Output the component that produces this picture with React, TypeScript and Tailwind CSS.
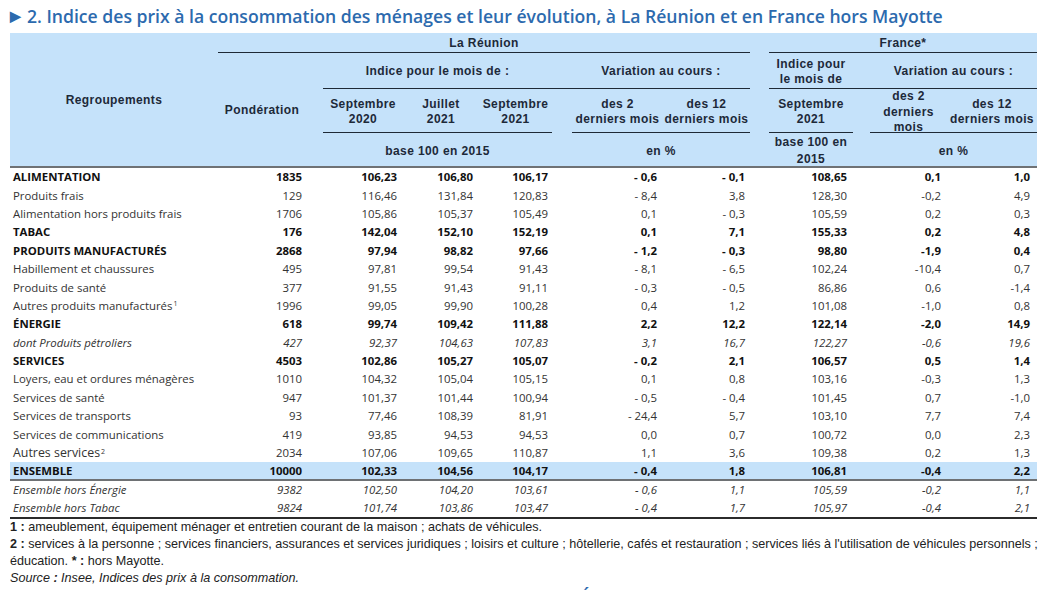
type Row = {
  label: string;
  sup?: string;
  v: string[];
  kind?: 'bold' | 'italic' | 'total';
  big?: boolean;
};

const rows: Row[] = [
  { label: 'ALIMENTATION', kind: 'bold', v: ['1835', '106,23', '106,80', '106,17', '- 0,6', '- 0,1', '108,65', '0,1', '1,0'] },
  { label: 'Produits frais', v: ['129', '116,46', '131,84', '120,83', '- 8,4', '3,8', '128,30', '-0,2', '4,9'] },
  { label: 'Alimentation hors produits frais', v: ['1706', '105,86', '105,37', '105,49', '0,1', '- 0,3', '105,59', '0,2', '0,3'] },
  { label: 'TABAC', kind: 'bold', v: ['176', '142,04', '152,10', '152,19', '0,1', '7,1', '155,33', '0,2', '4,8'] },
  { label: 'PRODUITS MANUFACTURÉS', kind: 'bold', v: ['2868', '97,94', '98,82', '97,66', '- 1,2', '- 0,3', '98,80', '-1,9', '0,4'] },
  { label: 'Habillement et chaussures', v: ['495', '97,81', '99,54', '91,43', '- 8,1', '- 6,5', '102,24', '-10,4', '0,7'] },
  { label: 'Produits de santé', v: ['377', '91,55', '91,43', '91,11', '- 0,3', '- 0,5', '86,86', '0,6', '-1,4'] },
  { label: 'Autres produits manufacturés', sup: '1', v: ['1996', '99,05', '99,90', '100,28', '0,4', '1,2', '101,08', '-1,0', '0,8'] },
  { label: 'ÉNERGIE', kind: 'bold', v: ['618', '99,74', '109,42', '111,88', '2,2', '12,2', '122,14', '-2,0', '14,9'] },
  { label: 'dont Produits pétroliers', kind: 'italic', v: ['427', '92,37', '104,63', '107,83', '3,1', '16,7', '122,27', '-0,6', '19,6'] },
  { label: 'SERVICES', kind: 'bold', v: ['4503', '102,86', '105,27', '105,07', '- 0,2', '2,1', '106,57', '0,5', '1,4'] },
  { label: 'Loyers, eau et ordures ménagères', v: ['1010', '104,32', '105,04', '105,15', '0,1', '0,8', '103,16', '-0,3', '1,3'] },
  { label: 'Services de santé', v: ['947', '101,37', '101,44', '100,94', '- 0,5', '- 0,4', '101,45', '0,7', '-1,0'] },
  { label: 'Services de transports', v: ['93', '77,46', '108,39', '81,91', '- 24,4', '5,7', '103,10', '7,7', '7,4'] },
  { label: 'Services de communications', v: ['419', '93,85', '94,53', '94,53', '0,0', '0,7', '100,72', '0,0', '2,3'] },
  { label: 'Autres services', sup: '2', big: true, v: ['2034', '107,06', '109,65', '110,87', '1,1', '3,6', '109,38', '0,2', '1,3'] },
  { label: 'ENSEMBLE', kind: 'total', v: ['10000', '102,33', '104,56', '104,17', '- 0,4', '1,8', '106,81', '-0,4', '2,2'] },
  { label: 'Ensemble hors Énergie', kind: 'italic', v: ['9382', '102,50', '104,20', '103,61', '- 0,6', '1,1', '105,59', '-0,2', '1,1'] },
  { label: 'Ensemble hors Tabac', kind: 'italic', v: ['9824', '101,74', '103,86', '103,47', '- 0,4', '1,7', '105,97', '-0,4', '2,1'] },
];

const widths = ['w-[208px]', 'w-[105px]', 'w-[80px]', 'w-[76px]', 'w-[73px]', 'w-[20px]', 'w-[91px]', 'w-[87px]', 'w-[19px]', 'w-[84px]', 'w-[17px]', 'w-[77px]', 'w-[90px]'];
// null = spacer column, otherwise index into row.v
const valueIdx: (number | null)[] = [null, 0, 1, 2, 3, null, 4, 5, null, 6, null, 7, 8];
const pads = ['', 'pr-[21px]', 'pr-[6px]', 'pr-[6px]', 'pr-[4px]', '', 'pr-[6px]', 'pr-[5px]', '', 'pr-[6px]', '', 'pr-[6px]', 'pr-[7px]'];

const line = 'border-b border-[#1e2a36]';

function DataRow({ row }: { row: Row }) {
  const isBold = row.kind === 'bold' || row.kind === 'total';
  const tone = isBold ? 'font-bold text-[#111]' : row.kind === 'italic' ? 'italic text-[#333]' : 'text-[#333]';
  const total = row.kind === 'total';
  return (
    <tr className={total ? 'h-[18.4px] bg-[#c5e2fa]' : 'h-[18.4px]'}>
      {valueIdx.map((vi, i) => {
        const edge = total ? 'shadow-[inset_0_-2px_0_#6e7174]' : '';
        if (i === 0) {
          return (
            <td key={i} className={`p-0 pl-[3px] text-left whitespace-nowrap ${tone} ${edge} ${row.big ? 'text-[12.4px]' : ''}`}>
              {row.label}
              {row.sup && <sup className="text-[7px] align-baseline ml-[1px]">{row.sup}</sup>}
            </td>
          );
        }
        return (
          <td key={i} className={`p-0 text-right whitespace-nowrap ${pads[i]} ${tone} ${edge}`}>
            {vi === null ? '' : row.v[vi]}
          </td>
        );
      })}
    </tr>
  );
}

export default function App() {
  return (
    <div className="w-[1048px] h-[591px] overflow-hidden bg-white pl-[10px] font-['Open_Sans',sans-serif]">
      <h2 className="h-[33px] pt-[4px] text-[17.6px] leading-[24px] font-semibold text-[#2c6aae] whitespace-nowrap">
        <span className="text-[14px] align-[2px] mr-[6px]">▶</span>
        2. Indice des prix à la consommation des ménages et leur évolution, à La Réunion et en France hors Mayotte
      </h2>

      <table className="w-[1027px] table-fixed border-separate border-spacing-0 text-[11.4px] leading-[18px]">
        <colgroup>
          {widths.map((w, i) => (
            <col key={i} className={w} />
          ))}
        </colgroup>
        <thead className="bg-[#c5e2fa] text-[#1d2939] font-['Liberation_Sans',Arial,sans-serif] font-bold text-[12px] tracking-[0.4px] leading-[15px]">
          <tr className="h-[20px]">
            <th rowSpan={4} className="p-0 pt-[2px] text-center align-middle">Regroupements</th>
            <th colSpan={7} className={`p-0 pt-[2px] text-center ${line}`}>La Réunion</th>
            <th className="p-0" />
            <th colSpan={4} className={`p-0 pt-[2px] text-center ${line}`}>France*</th>
          </tr>
          <tr className="h-[36px]">
            <th rowSpan={3} className="p-0 pr-[17px] pt-[2px] text-center align-middle">Pondération</th>
            <th colSpan={3} className={`p-0 pt-[1px] text-center ${line}`}>Indice pour le mois de :</th>
            <th className={`p-0 ${line}`} />
            <th colSpan={2} className={`p-0 pt-[1px] text-center ${line}`}>Variation au cours :</th>
            <th className="p-0" />
            <th className={`p-0 pt-[3px] text-center ${line}`}>
              Indice pour
              <br />
              le mois de
            </th>
            <th className={`p-0 ${line}`} />
            <th colSpan={2} className={`p-0 pt-[1px] text-center ${line}`}>Variation au cours :</th>
          </tr>
          <tr className="h-[44px]">
            <th className={`p-0 pt-[3px] text-center ${line}`}>
              Septembre
              <br />
              2020
            </th>
            <th className={`p-0 pt-[3px] text-center ${line}`}>
              Juillet
              <br />
              2021
            </th>
            <th className={`p-0 pt-[3px] text-center ${line}`}>
              Septembre
              <br />
              2021
            </th>
            <th className="p-0" />
            <th className={`p-0 pt-[3px] text-center whitespace-nowrap ${line}`}>
              des 2
              <br />
              derniers mois
            </th>
            <th className={`p-0 pt-[3px] text-center whitespace-nowrap ${line}`}>
              des 12
              <br />
              derniers mois
            </th>
            <th className="p-0" />
            <th className={`p-0 pt-[3px] text-center ${line}`}>
              Septembre
              <br />
              2021
            </th>
            <th className="p-0" />
            <th className={`p-0 text-center align-top ${line}`}>
              <div className="h-[43px] leading-[15.5px]">
                des 2
                <br />
                derniers
                <br />
                mois
              </div>
            </th>
            <th className={`p-0 pt-[3px] text-center whitespace-nowrap ${line}`}>
              des 12
              <br />
              derniers mois
            </th>
          </tr>
          <tr className="h-[33px]">
            <th colSpan={3} className="p-0 pt-[3px] text-center">base 100 en 2015</th>
            <th className="p-0" />
            <th colSpan={2} className="p-0 pt-[3px] text-center">en %</th>
            <th className="p-0" />
            <th className="p-0 text-center align-top">
              <div className="h-[33px] pt-[1px] leading-[17px]">
                base 100 en
                <br />
                2015
              </div>
            </th>
            <th className="p-0" />
            <th colSpan={2} className="p-0 pt-[3px] text-center">en %</th>
          </tr>
        </thead>
        <tbody>
          <tr>
            <td colSpan={13} className="p-0 h-[2px] leading-[0] text-[0px] bg-[#6f7275]" />
          </tr>
          {rows.map((r) => (
            <DataRow key={r.label} row={r} />
          ))}
          <tr>
            <td colSpan={13} className="p-0 h-[2px] leading-[0] text-[0px] bg-[#2b2b2b]" />
          </tr>
        </tbody>
      </table>

      <div className="w-[1030px] font-['Liberation_Sans',sans-serif] text-[12.6px] leading-[16.7px] text-[#222]">
        <p>
          <b>1 :</b> ameublement, équipement ménager et entretien courant de la maison ; achats de véhicules.
        </p>
        <p>
          <b>2 :</b> services à la personne ; services financiers, assurances et services juridiques ; loisirs et culture ; hôtellerie, cafés et restauration ; services liés à l'utilisation de véhicules personnels ;
          <br />
          éducation. <b>* :</b> hors Mayotte.
        </p>
        <p className="italic">
          Source <b>:</b> Insee, Indices des prix à la consommation.
        </p>
      </div>
      <div className="pl-[570px] text-[18px] leading-[22px] font-semibold text-[#2c6aae]">É</div>
    </div>
  );
}
